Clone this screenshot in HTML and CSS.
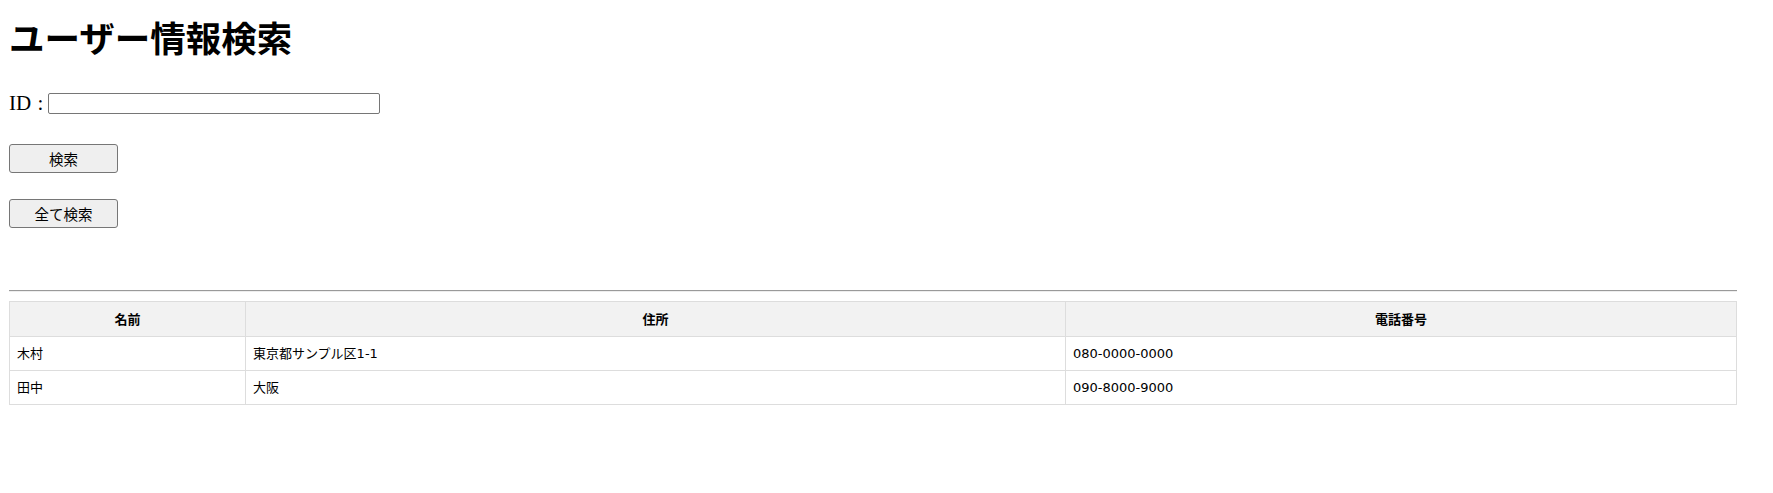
FILE: index.html
```html
<!DOCTYPE html>
<html lang="ja">
<head>
<meta charset="utf-8">
<title>ユーザー情報検索</title>
<link rel="stylesheet" href="styles.css">
</head>
<body>
<div class="page">
  <h1 class="title">ユーザー情報検索</h1>
  <div class="search-row">
    <label class="id-label" for="uid">ID <span class="colon">:</span></label>
    <input class="id-input" id="uid" type="text">
  </div>
  <div class="btn-row btn-row-first"><button class="btn" type="button">検索</button></div>
  <div class="btn-row btn-row-second"><button class="btn" type="button">全て検索</button></div>
  <hr class="divider">
  <table class="result">
    <thead>
      <tr><th class="col-name">名前</th><th class="col-addr">住所</th><th class="col-tel">電話番号</th></tr>
    </thead>
    <tbody>
      <tr><td>木村</td><td>東京都サンプル区1-1</td><td>080-0000-0000</td></tr>
      <tr><td>田中</td><td>大阪</td><td>090-8000-9000</td></tr>
    </tbody>
  </table>
</div>
</body>
</html>
```
FILE: styles.css
```css
html, body {
  margin: 0;
  padding: 0;
  background: #ffffff;
  color: #000000;
}

.page {
  width: 1728px;
  padding: 0 9px;
}

.title {
  margin: 17px 0 0;
  height: 40px;
  font-family: "Noto Sans CJK JP", sans-serif;
  font-weight: 700;
  font-size: 35.5px;
  line-height: 40px;
  letter-spacing: 0;
}

.search-row {
  margin-top: 36px;
  height: 21px;
  display: flex;
  align-items: center;
}

.id-label {
  font-family: "Liberation Serif", "Noto Sans CJK JP", serif;
  font-size: 21px;
  line-height: 21px;
  width: 38px;
  white-space: nowrap;
}

.colon {
  margin-left: 1px;
}

.id-input {
  box-sizing: border-box;
  width: 332px;
  height: 21px;
  margin: 0 0 0 1px;
  border: 1px solid #767676;
  border-radius: 2px;
  padding: 1px 2px;
  background: #ffffff;
}

.btn-row-first {
  margin-top: 30px;
}

.btn-row-second {
  margin-top: 26px;
}

.btn {
  box-sizing: border-box;
  width: 109px;
  height: 29px;
  margin: 0;
  padding: 0;
  border: 1px solid #767676;
  border-radius: 3px;
  background: #efefef;
  color: #000000;
  font-family: "Noto Sans CJK JP", sans-serif;
  font-size: 14.5px;
  line-height: 25px;
}

.divider {
  margin: 62px 0 0;
  height: 0;
  border: 0;
  border-top: 1px solid #9a9a9a;
  border-bottom: 1px solid #eeeeee;
}

.result {
  margin-top: 9px;
  width: 1728px;
  border-collapse: collapse;
  table-layout: fixed;
  font-family: "DejaVu Sans", "Noto Sans CJK JP", sans-serif;
  font-size: 13px;
}

.result th,
.result td {
  border: 1px solid #dddddd;
  padding: 8px 7px;
  line-height: 17px;
  text-align: left;
  white-space: nowrap;
}

.result th {
  background: #f2f2f2;
  text-align: center;
  font-weight: 700;
  line-height: 18px;
  font-family: "Noto Sans CJK JP", sans-serif;
  font-size: 13px;
}

.result td {
  font-family: "DejaVu Sans", "Noto Sans CJK JP", sans-serif;
}

.col-name { width: 221px; }
.col-addr { width: 805px; }
.col-tel { width: auto; }
```
